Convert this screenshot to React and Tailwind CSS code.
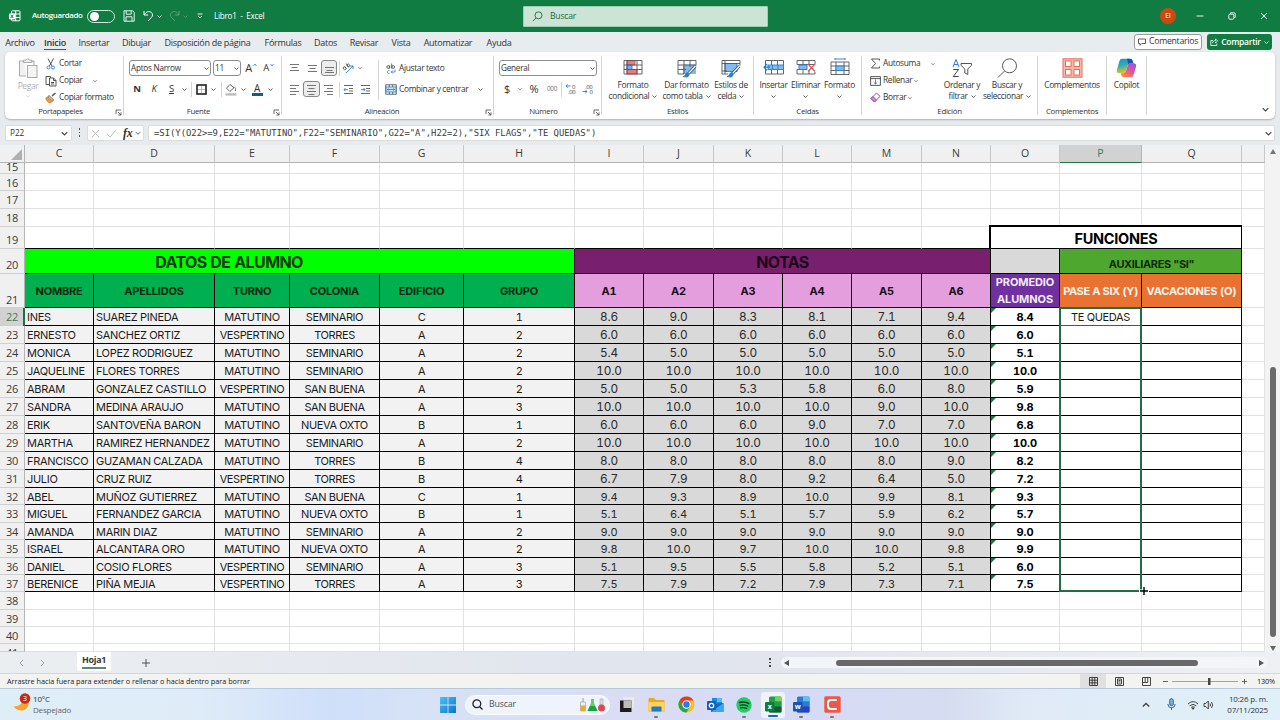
import React from "react";

const Chev = ({ c = "#444", w = 5, className = "" }) => (
  <svg width={w} height={w} viewBox="0 0 10 10" className={"shrink-0 " + className} fill="none" stroke={c} strokeWidth="1.7">
    <path d="M1 3l4 4 4-4" />
  </svg>
);

const Slot = ({ className = "", children }) => (
  <div className={"flex h-4 shrink-0 items-center justify-center " + className}>{children}</div>
);

const Sep = ({ className = "" }) => <div className={"w-px shrink-0 bg-[#d4d4d4] " + className} />;

const Launcher = () => (
  <svg width="7" height="7" viewBox="0 0 7 7" fill="none" stroke="#444" strokeWidth=".8">
    <path d="M1 5V1h5M3 3l3 3M6 3.4V6H3.4" />
  </svg>
);

const Group = ({ className, label, launch, pad = "", children }) => (
  <div className={"flex h-[66px] shrink-0 flex-col " + className}>
    <div className="flex min-h-0 flex-1">
      <div className="min-w-0 flex-1">{children}</div>
      <Sep className="mt-[4px]" />
    </div>
    <div className="flex h-[12px] shrink-0">
      <div className={"flex flex-1 items-center justify-center text-[7.8px] tracking-[-0.28px] text-[#333] " + pad}>{label}</div>
      {launch ? <div className="-ml-[9px] flex w-2 items-center"><Launcher /></div> : null}
      <Sep className="mb-[3px]" />
    </div>
  </div>
);

const Lines = ({ rows }) => (
  <svg width="11" height="11" viewBox="0 0 11 11" stroke="#666" strokeWidth=".9">
    {rows.map(([a, b, y]) => <path key={y} d={`M${a} ${y}H${b}`} />)}
  </svg>
);

const GridIcon = ({ children, w = 20 }) => (
  <svg width={w} height="20" viewBox="0 0 20 20" fill="none" stroke="#555" strokeWidth=".9">{children}</svg>
);

const Big = ({ className, icon, a, b, chev }) => (
  <div className={"flex shrink-0 flex-col items-center pt-[5px] " + className}>
    <div className="flex h-[22px] items-center">{icon}</div>
    <div className="mt-[1px] flex h-[11px] items-center whitespace-nowrap">{a}</div>
    <div className="flex h-[10px] items-center gap-[3px] whitespace-nowrap">{b}{chev ? <Chev w={5} /> : null}</div>
  </div>
);

const Tab = ({ className, children, on }) => (
  <div className={"flex h-[18px] shrink-0 items-center justify-center whitespace-nowrap " + className}>
    <span className={on ? "border-b border-[#107c41] pt-px font-semibold leading-[13px]" : "pt-px leading-[14px]"}>{children}</span>
  </div>
);

const Titlebar = () => (
  <div className="flex h-8 items-center bg-[#107c41] text-[8.4px] text-white">
    <svg width="12" height="12" viewBox="0 0 12 12" fill="none" stroke="white" strokeWidth="1" className="ml-[9px]">
      <rect x="2.5" y=".8" width="8.5" height="10" rx="1" />
      <path d="M6.7 1v10M3 4h8M6 7.5h5" />
      <rect x="0" y="3.4" width="6" height="6" rx=".8" fill="white" stroke="none" />
      <path d="M1.7 4.8l2.6 3.2M4.3 4.8L1.7 8" stroke="#107c41" />
    </svg>
    <div className="ml-[11px] w-[55px] text-[7.9px] font-semibold tracking-[-0.35px]">Autoguardado</div>
    <div className="flex h-[13px] w-[28px] items-center rounded-full border border-[#d5e8dc] pl-[2px]"><div className="size-[9px] rounded-full bg-white" /></div>
    <svg width="12" height="12" viewBox="0 0 12 12" fill="none" stroke="white" strokeWidth=".9" className="ml-[8px]">
      <path d="M1 .8h8.700l1.500 1.500v8.900H1zM3.200 1v3.200h5V1M3 11V6.800h6V11" />
    </svg>
    <svg width="11" height="12" viewBox="0 0 11 12" fill="none" stroke="white" strokeWidth="1" className="ml-[8px]">
      <path d="M1 1v4h4.200M1.200 4.800C3.300 1.600 6 .8 8 2.200c2 1.500 1.900 3.800.4 5.300L5 11" />
    </svg>
    <Chev c="white" w={5} className="ml-[3px]" />
    <svg width="11" height="12" viewBox="0 0 11 12" fill="none" stroke="#55a377" strokeWidth="1" className="ml-[7px]">
      <path d="M10 1v4H5.800M9.800 4.800C7.700 1.600 5 .8 3 2.200c-2 1.500-1.900 3.800-.4 5.300L6 11" />
    </svg>
    <Chev c="#55a377" w={5} className="ml-[3px]" />
    <svg width="6" height="6" viewBox="0 0 6 6" fill="none" stroke="white" strokeWidth=".9" className="ml-[9px]"><path d="M.5 1h5M1.200 3L3 4.800 4.800 3" /></svg>
    <div className="ml-[11px] w-[309px] whitespace-pre text-[8.100px] tracking-[-0.25px]">Libro1  -  Excel</div>
    <div className="flex h-[21px] w-[245px] items-center rounded-[1px] border border-[#9fcdb3] bg-[#cbe4d5] text-[8.600px] tracking-[-0.2px] text-[#1d6b41]">
      <svg width="11" height="11" viewBox="0 0 11 11" fill="none" stroke="#1d6b41" strokeWidth=".9" className="ml-[8px] mr-[7px]"><circle cx="6.500" cy="4.300" r="3.500" /><path d="M4 7L.8 10.200" /></svg>
      Buscar
    </div>
    <div className="ml-[392px] flex size-4 items-center justify-center rounded-full bg-[#ca4a14] text-[6.500px]">EI</div>
    <svg width="8" height="8" viewBox="0 0 8 8" stroke="white" strokeWidth=".9" className="ml-[20px]"><path d="M.5 4h7" /></svg>
    <svg width="8" height="8" viewBox="0 0 8 8" fill="none" stroke="white" strokeWidth=".9" className="ml-[24px]"><rect x=".8" y="2.200" width="5" height="5" rx="1" /><path d="M2.500 2V.8h3.700q1 0 1 1v3.700H6" /></svg>
    <svg width="8" height="8" viewBox="0 0 8 8" stroke="white" strokeWidth=".9" className="ml-[24px]"><path d="M1 1l6 6M7 1L1 7" /></svg>
  </div>
);

const Tabs = () => (
  <div className="flex h-5 items-center bg-[#e7ecef] text-[9px] tracking-[-0.27px] text-[#333]">
    <Tab className="w-[40px]">Archivo</Tab>
    <Tab className="w-[30px]" on>Inicio</Tab>
    <Tab className="w-[48px]">Insertar</Tab>
    <Tab className="w-[37px]">Dibujar</Tab>
    <Tab className="w-[105px]">Disposición de página</Tab>
    <Tab className="w-[46px]">Fórmulas</Tab>
    <Tab className="w-[39px]">Datos</Tab>
    <Tab className="w-[38px]">Revisar</Tab>
    <Tab className="w-[36px]">Vista</Tab>
    <Tab className="w-[58px]">Automatizar</Tab>
    <Tab className="w-[44px]">Ayuda</Tab>
    <div className="flex-1" />
    <div className="flex h-4 w-[68px] items-center justify-center gap-[3px] rounded-[3px] border border-[#9a9a9a] bg-white text-[8.700px]">
      <svg width="8" height="8" viewBox="0 0 8 8" fill="none" stroke="#333" strokeWidth=".8"><path d="M.5 1h7v4.500H3.800L2 7.300V5.500H.5z" /></svg>
      Comentarios
    </div>
    <div className="ml-[5px] mr-[8px] flex h-4 w-[65px] items-center justify-center gap-[3px] rounded-[3px] bg-[#107c41] text-[8.500px] font-semibold text-white">
      <svg width="8" height="8" viewBox="0 0 8 8" fill="none" stroke="white" strokeWidth=".8"><path d="M3 2.500H.8v5h6V5.500M2.500 5.200c.3-2 1.500-2.700 3-2.700V.8L7.700 3 5.500 5V3.700" /></svg>
      <span>Compartir</span><Chev c="white" w={5} />
    </div>
  </div>
);

const Combo = ({ className, children }) => (
  <div className={"flex h-4 shrink-0 items-center justify-between rounded-[3px] border border-[#8f8f8f] bg-white pl-[1px] pr-[1px] text-[8.200px] tracking-[-0.25px] " + className}>
    <span className="whitespace-nowrap">{children}</span><Chev w={5} />
  </div>
);

const Ribbon = () => (
  <div className="h-[73px] bg-[#e7ebed] px-[5px]">
    <div className="flex h-[67px] w-[1270px] rounded-[5px] bg-white text-[8.400px] tracking-[-0.34px] text-[#333] shadow-[0_1px_2px_rgba(0,0,0,0.25)]">
      <Group className="w-[119px]" label="Portapapeles" launch pad="pr-[8px]">
        <div className="flex">
          <div className="flex w-[40px] flex-col items-center pl-[6px] pt-[5px] text-[#b0b0b0]">
            <svg width="20" height="22" viewBox="0 0 20 22" fill="none" stroke="#aaa" strokeWidth="1">
              <path d="M8 19H1.500V4H6M13 4h3v4M5.500 5.500V3.200H8a1.800 1.800 0 013.500 0H14v2.300z" fill="#f1f1f1" />
              <rect x="9.500" y="8.500" width="9.500" height="12" fill="#f5f5f5" />
            </svg>
            <div className="mt-[1px] h-[11px] leading-[12px]">Pegar</div>
            <Chev c="#bbb" w={4} className="mt-[3px]" />
          </div>
          <div className="flex flex-col pt-[3px]">
            <div className="flex h-[17px] items-center">
              <svg width="12" height="12" viewBox="0 0 12 12" fill="none" strokeWidth=".9"><path d="M3 .5l4 7.500M8.500.5L4.500 8" stroke="#444" /><circle cx="3.500" cy="9.500" r="1.500" stroke="#2b7cd3" /><circle cx="8" cy="9.500" r="1.500" stroke="#2b7cd3" /></svg>
              <span className="ml-[2px]">Cortar</span>
            </div>
            <div className="flex h-[17px] items-center">
              <svg width="12" height="12" viewBox="0 0 12 12" fill="none" stroke="#444" strokeWidth=".9"><path d="M4.500 9.500H1v-8h4.500V3M4.500 3h4l2.500 2.500V11H4.500zM8.500 3v2.500H11M6 7.500h3M6 9h3" /></svg>
              <span className="ml-[2px] w-[34px]">Copiar</span><Chev w={4} />
            </div>
            <div className="flex h-[17px] items-center">
              <svg width="12" height="12" viewBox="0 0 12 12" fill="none" strokeWidth="1"><path d="M7 4l3.500-3" stroke="#555" strokeWidth="1.600" /><path d="M4 3.500L8.500 8l-1 1.200L3 4.800z" fill="#fff" stroke="#555" /><path d="M3 5L.8 6c.8 2.600 2 4.200 4 5l2.500-2z" fill="#f29a42" stroke="#e07b20" /></svg>
              <span className="ml-[2px]">Copiar formato</span>
            </div>
          </div>
        </div>
      </Group>

      <Group className="w-[158px]" label="Fuente" launch pad="pr-[9px]">
        <div className="flex pl-[5px] pt-[8px]">
          <Combo className="w-[82px]">Aptos Narrow</Combo>
          <Combo className="ml-[2px] w-[28px]">11</Combo>
          <Slot className="w-[19px] gap-px pl-px"><span className="text-[11px]">A</span><svg width="4" height="4" viewBox="0 0 4 4" fill="none" stroke="#2b7cd3" strokeWidth=".8" className="mb-[6px]"><path d="M.5 3L2 1l1.500 2" /></svg></Slot>
          <Slot className="w-[17px] gap-px"><span className="text-[9.500px]">A</span><svg width="4" height="4" viewBox="0 0 4 4" fill="none" stroke="#2b7cd3" strokeWidth=".8" className="mb-[6px]"><path d="M.5 1L2 3l1.500-2" /></svg></Slot>
        </div>
        <div className="flex pl-[5px] pt-[5px] text-[9.500px]">
          <Slot className="w-4"><b>N</b></Slot>
          <Slot className="w-[18px]"><i>K</i></Slot>
          <Slot className="w-[17px]"><u>S</u></Slot>
          <Slot className="w-[9px]"><Chev /></Slot>
          <Slot className="w-[5px]"><Sep className="h-[15px]" /></Slot>
          <Slot className="w-[14px]"><svg width="11" height="11" viewBox="0 0 11 11" fill="none" stroke="#111" strokeWidth="1.500"><rect x="1" y="1" width="9" height="9" /><path d="M5.500 2v7M2 5.500h7" stroke="#aaa" strokeWidth=".8" /></svg></Slot>
          <Slot className="w-[11px]"><Chev /></Slot>
          <Slot className="w-[4px]"><Sep className="h-[15px]" /></Slot>
          <Slot className="w-[15px]"><svg width="12" height="13" viewBox="0 0 12 13" fill="none" stroke="#555" strokeWidth=".9"><path d="M5 1.500L1.500 5.200l3.300 3.300L9 4.700z" /><path d="M9.500 4q1.800 1.500 1 4" stroke="#2b7cd3" /><rect x=".5" y="10.200" width="11" height="2.400" fill="#bdbdbd" stroke="none" /></svg></Slot>
          <Slot className="w-[10px]"><Chev /></Slot>
          <Slot className="w-[18px]"><div className="flex flex-col items-center"><span className="h-[10px] text-[10px] leading-[10px]">A</span><div className="h-[3px] w-[11px] bg-[#156082]" /></div></Slot>
          <Slot className="w-[9px]"><Chev /></Slot>
        </div>
      </Group>

      <Group className="w-[212px]" label="Alineación" launch pad="pr-[12px]">
        <div className="flex pt-[8px]">
          <div className="flex flex-col gap-[5px] pl-[4px]">
            <div className="flex">
              <Slot className="w-[17px]"><Lines rows={[[1, 10, 1.5], [2.5, 8.5, 4.5], [1, 10, 7.5]]} /></Slot>
              <Slot className="w-[18px]"><Lines rows={[[1, 10, 2.5], [2.5, 8.5, 5.5], [1, 10, 8.5]]} /></Slot>
              <Slot className="w-4 rounded-[3px] border border-[#888] bg-[#ececec]"><Lines rows={[[1, 10, 4.5], [2.5, 8.5, 7.5], [1, 10, 9.5]]} /></Slot>
              <Slot className="w-[5px]"><Sep className="h-[15px]" /></Slot>
              <Slot className="w-[12px]"><svg width="12" height="12" viewBox="0 0 12 12" fill="none" stroke="#444" strokeWidth=".8"><ellipse cx="2.600" cy="6.300" rx="1.300" ry="1.500" transform="rotate(-40 2.600 6.300)" /><path d="M2.600 4.400L4.600 6.900M4 1.500l3 3.800" /><ellipse cx="6.300" cy="3.400" rx="1.300" ry="1.500" transform="rotate(-40 6.300 3.400)" /><path d="M4 11l7-7M11 7V4H8" stroke="#2b7cd3" strokeWidth=".9" /></svg></Slot>
              <Slot className="w-[11px]"><Chev w={4} /></Slot>
            </div>
            <div className="flex">
              <Slot className="w-[17px]"><Lines rows={[[1, 10, 1.5], [1, 7, 4.5], [1, 10, 7.5], [1, 7, 10.5]]} /></Slot>
              <Slot className="w-[17px] rounded-[3px] border border-[#888] bg-[#ececec]"><Lines rows={[[1, 10, 1.5], [2.5, 8.5, 4.5], [1, 10, 7.5], [2.5, 8.5, 10.5]]} /></Slot>
              <Slot className="w-[17px]"><Lines rows={[[1, 10, 1.5], [4, 10, 4.5], [1, 10, 7.5], [4, 10, 10.5]]} /></Slot>
              <Slot className="w-[5px]"><Sep className="h-[15px]" /></Slot>
              <Slot className="w-[12px]"><svg width="11" height="11" viewBox="0 0 11 11" fill="none" stroke="#555" strokeWidth=".9"><path d="M1 1.500h9M6 4.500h4M6 7h4M1 9.500h9" /><path d="M5 5.700H1M2.500 4L1 5.700l1.500 1.600" stroke="#2b7cd3" /></svg></Slot>
              <Slot className="w-[23px]"><svg width="11" height="11" viewBox="0 0 11 11" fill="none" stroke="#555" strokeWidth=".9"><path d="M1 1.500h9M6 4.500h4M6 7h4M1 9.500h9" /><path d="M1 5.700h4M3.500 4L5 5.700 3.500 7.300" stroke="#2b7cd3" /></svg></Slot>
            </div>
          </div>
          <Sep className="ml-[1px] h-[40px]" />
          <div className="flex flex-col gap-[5px] pl-[6px]">
            <div className="flex h-4 items-center pt-px">
              <svg width="12" height="12" viewBox="0 0 12 12" fill="none" stroke="#444" strokeWidth=".8"><circle cx="3.200" cy="4" r="1.400" /><path d="M4.700 2.500v3M6.700.5v5" /><circle cx="8.200" cy="4" r="1.400" /><path d="M4.600 7.600a1.500 1.500 0 100 2.600" stroke="#2b7cd3" /><path d="M10 6.500V9H6.300M7.700 7.500L6.200 9l1.500 1.500" stroke="#2b7cd3" /></svg>
              <span className="ml-[2px]">Ajustar texto</span>
            </div>
            <div className="flex h-4 items-center">
              <svg width="12" height="11" viewBox="0 0 12 11" fill="none" stroke="#444" strokeWidth=".8"><rect x=".8" y=".8" width="10.400" height="9.400" /><path d="M4.300 1v2M7.700 1v2M4.300 8v2M7.700 8v2" /><rect x="1" y="3" width="10" height="5" fill="#cfe6fa" stroke="#2b7cd3" /><path d="M2 5.500h8M3.500 4.500l-1.200 1 1.200 1M8.500 4.500l1.200 1-1.200 1" stroke="#2b7cd3" /></svg>
              <span className="ml-[2px] w-[79px]">Combinar y centrar</span><Chev />
            </div>
          </div>
        </div>
      </Group>

      <Group className="w-[108px]" label="Número" launch pad="pr-[9px]">
        <div className="flex pl-[5px] pt-[8px]"><Combo className="w-[98px]">General</Combo></div>
        <div className="flex pl-[4px] pt-[5px]">
          <Slot className="w-[18px] text-[11px]">$</Slot>
          <Slot className="w-[7px]"><Chev w={4} /></Slot>
          <Slot className="w-[22px] text-[11px]">%</Slot>
          <Slot className="w-[14px] text-[6.500px] text-[#777]">000</Slot>
          <Slot className="w-[5px]"><Sep className="h-[15px]" /></Slot>
          <Slot className="w-[14px]"><svg width="12" height="12" viewBox="0 0 12 12" fontSize="6" fill="#444"><text x="7" y="5.500">0</text><text x="3" y="11">.00</text><path d="M5.500 3H1M2.700 1.300L1 3l1.700 1.700" fill="none" stroke="#2b7cd3" strokeWidth=".9" /></svg></Slot>
          <Slot className="w-[20px]"><svg width="12" height="12" viewBox="0 0 12 12" fontSize="6" fill="#444"><text x="3" y="5.500">.00</text><text x="7.500" y="11">0</text><path d="M.5 8.500H5M3.300 6.800L5 8.500l-1.700 1.700" fill="none" stroke="#2b7cd3" strokeWidth=".9" /></svg></Slot>
        </div>
      </Group>

      <Group className="w-[152px]" label="Estilos">
        <div className="flex pl-[4px]">
          <Big className="w-[54px]" a="Formato" b="condicional" chev icon={<GridIcon><rect x="4" y="2.500" width="8" height="4.500" fill="#f4777f" stroke="#e2505a" /><rect x="4" y="7" width="5" height="4.500" fill="#6cb1ee" stroke="#2b7cd3" /><rect x="4" y="11.500" width="10" height="4.500" fill="#f4777f" stroke="#e2505a" /><path d="M1 2.500h18v13.500H1zM1 7h18M1 11.500h18M4 2.500V16M14 2.500V16" /></GridIcon>} />
          <Big className="w-[53px]" a="Dar formato" b="como tabla" chev icon={<GridIcon><rect x="6" y="6.500" width="13" height="9.500" fill="#7fbcf2" stroke="none" /><path d="M1 2.500h18v5M1 2.500v13.500h6M1 7h18M1 11.500h8M7 2.500V16M13 2.500V9" /><path d="M18.500 8l-7 7.500" stroke="#444" strokeWidth="2.800" /><path d="M18.500 8l-7 7.500" stroke="#fff" strokeWidth="1.200" /><path d="M6 18.500q2 0 2.500-2t2-1.800 1.500 2-2 2.300z" fill="#2b7cd3" stroke="#2b7cd3" /></GridIcon>} />
          <Big className="w-[36px]" a="Estilos de" b="celda" chev icon={<GridIcon><rect x="4" y="5.500" width="12" height="8" fill="#7fbcf2" stroke="#2b7cd3" /><path d="M1 2.500h18v5M1 2.500v13.500h6M1 5.500h18M4 2.500V16M1 13h5" /><path d="M18.500 8l-7 7.500" stroke="#444" strokeWidth="2.800" /><path d="M18.500 8l-7 7.500" stroke="#fff" strokeWidth="1.200" /><path d="M6 18.500q2 0 2.500-2t2-1.800 1.500 2-2 2.300z" fill="#2b7cd3" stroke="#2b7cd3" /></GridIcon>} />
        </div>
      </Group>

      <Group className="w-[108px]" label="Celdas">
        <div className="flex pl-[3px]">
          <Big className="w-[33px]" a="Insertar" b="" chev icon={<GridIcon w={22}><path d="M1.500 2.500h18v13.500h-18zM7.500 2.500V16M13.500 2.500V16" /><rect x="4" y="7" width="15.500" height="4.500" fill="#7fbcf2" stroke="#2b7cd3" /><path d="M8.500 7v4.500M14 7v4.500" stroke="#2b7cd3" /><path d="M6 9.200H0M3 6L0 9.200l3 3.300" stroke="#2b7cd3" strokeWidth="1.200" /></GridIcon>} />
          <Big className="w-[31px]" a="Eliminar" b="" chev icon={<GridIcon><path d="M1 2.500h18v4M1 2.500v4h18M1 11.500V16h18v-2M1 11.500h10M7 2.500v4M13 2.500v4M7 12v4M13 12v4" /><rect x="3" y="7" width="8" height="4.500" fill="#7fbcf2" stroke="#2b7cd3" /><path d="M12 6l7 7.500M19 6l-7 7.500" stroke="#e2505a" strokeWidth="1.200" /></GridIcon>} />
          <Big className="w-[37px]" a="Formato" b="" chev icon={<GridIcon><path d="M1 4h18v12.500H1zM1 8h18M1 12.500h18M6 4v12.500M14 4v12.500" /><rect x="6" y="8" width="8" height="4.500" fill="#7fbcf2" stroke="#2b7cd3" /><path d="M5 1h10M5 0v2M15 0v2" stroke="#2b7cd3" /></GridIcon>} />
        </div>
      </Group>

      <Group className="w-[176px]" label="Edición">
        <div className="flex pl-[8px]">
          <div className="flex w-[66px] flex-col pt-[3px]">
            <div className="flex h-[17px] items-center">
              <svg width="11" height="11" viewBox="0 0 11 11" fill="none" stroke="#444" strokeWidth=".9"><path d="M9.500 2.500V1H1.500l4 4.500-4 4.500h8V8.500" /></svg>
              <span className="ml-[2px] w-[48px]">Autosuma</span><Chev w={4} />
            </div>
            <div className="flex h-[17px] items-center">
              <svg width="11" height="10" viewBox="0 0 11 10" fill="none" stroke="#444" strokeWidth=".9"><path d="M.6.600h9.800v8.800H.6zM.6 2.600h9.800" /><path d="M5.500 3.500v4.500M3.700 6.300L5.500 8l1.800-1.700" stroke="#2b7cd3" /></svg>
              <span className="ml-[2px] mr-[2px]">Rellenar</span><Chev w={4} />
            </div>
            <div className="flex h-[17px] items-center">
              <svg width="11" height="11" viewBox="0 0 11 11" fill="none" stroke="#8f3fa8" strokeWidth=".9"><path d="M1 6.500L6.500 1 10 4.300 4.500 10z" /><path d="M1 6.500L3 4.500l3.500 3.500-2 2z" fill="#c98fdb" /></svg>
              <span className="ml-[2px] mr-[2px]">Borrar</span><Chev w={4} />
            </div>
          </div>
          <Big className="w-[52px]" a="Ordenar y" b="filtrar" chev icon={<svg width="20" height="20" viewBox="0 0 20 20" fill="none" strokeWidth="1"><path d="M1 9L4 1.500 7 9M2 6.500h4" stroke="#2b7cd3" /><path d="M1.300 11.500H6.500L1.300 18.500h5.400" stroke="#444" /><path d="M9 5.500h10.500v1.800L15.800 11v5.500l-3 -1.500v-4L9 7.300z" stroke="#555" /></svg>} />
          <Big className="w-[38px]" a="Buscar y" b="seleccionar" chev icon={<svg width="21" height="21" viewBox="0 0 21 21" fill="none" stroke="#444" strokeWidth=".9"><circle cx="12.500" cy="7.800" r="7" /><path d="M7.500 13L1 19.500" /></svg>} />
        </div>
      </Group>

      <Group className="w-[69px]" label="Complementos">
        <Big className="w-full" a="Complementos" b="" icon={<svg width="21" height="20" viewBox="0 0 21 20" stroke="#e0705c" strokeWidth="1"><rect x="1" y=".8" width="19" height="18.400" fill="#f9b8aa" /><rect x="3.500" y="3" width="5.500" height="5.500" fill="#fff" /><rect x="12" y="3" width="5.500" height="5.500" fill="#fff" /><rect x="3.500" y="11.500" width="5.500" height="5.500" fill="#fff" /><rect x="12" y="11.500" width="5.500" height="5.500" fill="#fff" /></svg>} />
      </Group>

      <Group className="w-[40px]" label="">
        <Big className="w-full" a="Copilot" b="" icon={<svg width="21" height="20" viewBox="0 0 21 20">
          <defs>
            <linearGradient id="cpa" x1="0" y1="0" x2=".3" y2="1"><stop offset="0" stopColor="#1b8fe0" /><stop offset=".5" stopColor="#2bb0a8" /><stop offset="1" stopColor="#f3c21c" /></linearGradient>
            <linearGradient id="cpb" x1=".8" y1="0" x2=".2" y2="1"><stop offset="0" stopColor="#a14fe0" /><stop offset=".5" stopColor="#e2559a" /><stop offset="1" stopColor="#f79138" /></linearGradient>
          </defs>
          <path d="M6 .8h8q2 0 2.600 2l.8 2.500h-3q-2 0-2.600 2l-2 6q-.6 2-2.600 2H3.500Q0 15.300 1 11.800L3.400 3Q4 .8 6 .8z" fill="url(#cpa)" />
          <path d="M15 19.200H8q-2 0-2.600-2l-.6-2h2.400q2 0 2.600-2l2-6q.6-2 2.600-2h3.100q3.500 0 2.500 3.500L17.600 17q-.6 2.200-2.600 2.200z" fill="url(#cpb)" />
          <path d="M11 .8h3q2 0 2.600 2l.8 2.500h-3q-1.500 0-2.200 1.200z" fill="#1c4fb8" />
        </svg>} />
      </Group>
      <div className="flex flex-1 items-end justify-end pb-[6px] pr-[6px]"><Chev w={7} /></div>
    </div>
  </div>
);

const FormulaBar = () => (
  <div className="flex h-5 items-start bg-[#e8ebed] pl-[5px] text-[#333]">
    <div className="flex h-[16px] w-[67px] items-center justify-between rounded-[2px] border border-[#dcdcdc] bg-white pl-[4px] pr-[3px] text-[8.300px] tracking-[-0.1px]">P22<Chev w={7} /></div>
    <div className="flex h-[15px] w-[15px] flex-col items-center justify-center gap-[2px]"><i className="size-[1.500px] bg-[#555]" /><i className="size-[1.500px] bg-[#555]" /><i className="size-[1.500px] bg-[#555]" /></div>
    <div className="flex h-[16px] w-[57px] items-center rounded-[2px] border border-[#dcdcdc] bg-white pl-[3px]">
      <svg width="9" height="9" viewBox="0 0 9 9" stroke="#b5b5b5" strokeWidth=".9"><path d="M1 1l7 7M8 1L1 8" /></svg>
      <svg width="11" height="9" viewBox="0 0 11 9" fill="none" stroke="#b5b5b5" strokeWidth=".9" className="ml-[6px]"><path d="M1 5l3 3 6-7" /></svg>
      <i className="ml-[6px] font-['Liberation_Serif',serif] text-[12px] font-bold leading-none tracking-[-0.3px]">fx</i>
      <Chev w={6} c="#999" className="ml-[3px]" />
    </div>
    <div className="ml-[4px] flex h-[16px] w-[1127px] items-center justify-between rounded-[2px] border border-[#dcdcdc] bg-white pl-[5px] pr-[2px]">
      <span className="whitespace-pre pt-px font-['DejaVu_Sans_Mono',monospace] text-[8.900px] tracking-[-0.015px] text-[#3a3a3a]">{'=SI(Y(O22>=9,E22="MATUTINO",F22="SEMINARIO",G22="A",H22=2),"SIX FLAGS","TE QUEDAS")'}</span>
      <Chev w={7} />
    </div>
  </div>
);

const cols = ["C", "D", "E", "F", "G", "H", "I", "J", "K", "L", "M", "N", "O", "P", "Q", ""];
const data = [
  ["INES", "SUAREZ PINEDA", "MATUTINO", "SEMINARIO", "C", "1", "8.6", "9.0", "8.3", "8.1", "7.1", "9.4", "8.4"],
  ["ERNESTO", "SANCHEZ ORTIZ", "VESPERTINO", "TORRES", "A", "2", "6.0", "6.0", "6.0", "6.0", "6.0", "6.0", "6.0"],
  ["MONICA", "LOPEZ RODRIGUEZ", "MATUTINO", "SEMINARIO", "A", "2", "5.4", "5.0", "5.0", "5.0", "5.0", "5.0", "5.1"],
  ["JAQUELINE", "FLORES TORRES", "MATUTINO", "SEMINARIO", "A", "2", "10.0", "10.0", "10.0", "10.0", "10.0", "10.0", "10.0"],
  ["ABRAM", "GONZALEZ CASTILLO", "VESPERTINO", "SAN BUENA", "A", "2", "5.0", "5.0", "5.3", "5.8", "6.0", "8.0", "5.9"],
  ["SANDRA", "MEDINA ARAUJO", "MATUTINO", "SAN BUENA", "A", "3", "10.0", "10.0", "10.0", "10.0", "9.0", "10.0", "9.8"],
  ["ERIK", "SANTOVEÑA BARON", "MATUTINO", "NUEVA OXTO", "B", "1", "6.0", "6.0", "6.0", "9.0", "7.0", "7.0", "6.8"],
  ["MARTHA", "RAMIREZ HERNANDEZ", "MATUTINO", "SEMINARIO", "A", "2", "10.0", "10.0", "10.0", "10.0", "10.0", "10.0", "10.0"],
  ["FRANCISCO", "GUZAMAN CALZADA", "MATUTINO", "TORRES", "B", "4", "8.0", "8.0", "8.0", "8.0", "8.0", "9.0", "8.2"],
  ["JULIO", "CRUZ RUIZ", "VESPERTINO", "TORRES", "B", "4", "6.7", "7.9", "8.0", "9.2", "6.4", "5.0", "7.2"],
  ["ABEL", "MUÑOZ GUTIERREZ", "MATUTINO", "SAN BUENA", "C", "1", "9.4", "9.3", "8.9", "10.0", "9.9", "8.1", "9.3"],
  ["MIGUEL", "FERNANDEZ GARCIA", "MATUTINO", "NUEVA OXTO", "B", "1", "5.1", "6.4", "5.1", "5.7", "5.9", "6.2", "5.7"],
  ["AMANDA", "MARIN DIAZ", "MATUTINO", "SEMINARIO", "A", "2", "9.0", "9.0", "9.0", "9.0", "9.0", "9.0", "9.0"],
  ["ISRAEL", "ALCANTARA ORO", "MATUTINO", "NUEVA OXTO", "A", "2", "9.8", "10.0", "9.7", "10.0", "10.0", "9.8", "9.9"],
  ["DANIEL", "COSIO FLORES", "VESPERTINO", "SEMINARIO", "A", "3", "5.1", "9.5", "5.5", "5.8", "5.2", "5.1", "6.0"],
  ["BERENICE", "PIÑA MEJIA", "VESPERTINO", "TORRES", "A", "3", "7.5", "7.9", "7.2", "7.9", "7.3", "7.1", "7.5"],
];

const Cell = ({ className = "", children }) => (
  <div className={"flex min-w-0 items-center justify-center overflow-hidden whitespace-nowrap border-b border-r " + className}>{children}</div>
);
const RowHead = ({ n, className = "items-center" }) => (
  <div className={"flex justify-center overflow-hidden border-b border-r border-b-[#d0d0d0] border-r-[#b5b5b5] font-['Open_Sans',sans-serif] text-[11px] leading-none tracking-[-0.2px] " + className + (n === 22 ? " bg-[#d2d2d2] text-[#3f7a5e]" : " bg-[#f0f0f0] text-[#3a3a3a]")}>{n}</div>
);
const blank = (n, count = 16) => Array.from({ length: count }, (_, i) => <Cell key={n + "-" + i} className="border-[#e1e1e1] bg-white" />);
const headRule = (n, count) => Array.from({ length: count }, (_, i) => <Cell key={n + "-" + i} className="border-b-black border-r-[#e1e1e1] bg-white" />);
const heads = ["NOMBRE", "APELLIDOS", "TURNO", "COLONIA", "EDIFICIO", "GRUPO", "A1", "A2", "A3", "A4", "A5", "A6"];

const Sheet = () => (
  <div className="flex h-[507px] bg-[#f0f0f0]">
    <div className="relative grid w-[1265px] grid-cols-[25px_69px_121px_75px_90px_84px_111px_69px_70px_69px_69px_70px_69px_69px_82px_100px_23px] grid-rows-[18px_11px_17px_18px_18px_22px_25px_34px_repeat(10,18px)_17px_18px_17px_18px_17px_17px_18px_17px_17px_8px] overflow-hidden font-['Inter',sans-serif] text-[11px] tabular-nums text-[#1c1c1c]">
      <div className="flex items-end justify-end border-b border-r border-[#b5b5b5] bg-[#f0f0f0] p-[2px]">
        <svg width="11" height="11" viewBox="0 0 11 11"><path d="M11 0v11H0z" fill="#b0b0b0" /></svg>
      </div>
      {cols.map((c) => (
        <Cell key={"h" + c} className={"pt-px font-['Open_Sans',sans-serif] text-[10.500px] " + (c === "P" ? "border-b-[#217346] border-r-[#b5b5b5] bg-[#d2d2d2] text-[#3f7a5e]" : "border-b-[#b5b5b5] border-r-[#c8c8c8] bg-[#f0f0f0] text-[#3a3a3a]")}>{c}</Cell>
      ))}
      <RowHead n={15} className="items-end pb-[1px]" />{blank(15)}
      <RowHead n={16} />{blank(16)}
      <RowHead n={17} />{blank(17)}
      <RowHead n={18} />{blank(18)}
      <RowHead n={19} className="items-end pb-[3px]" />
      {headRule("a", 12)}
      <Cell className="col-span-3 border-black bg-white pt-[3px] text-[14.500px] font-bold tracking-[-0.3px] text-black">FUNCIONES</Cell>
      <Cell className="border-[#e1e1e1] bg-white" />

      <RowHead n={20} className="items-end pb-[3px]" />
      <Cell className="col-span-6 border-black bg-[#00ff00] pr-[141px] pt-px text-[16px] font-bold tracking-[-0.58px] text-[#0c3a0c]">DATOS DE ALUMNO</Cell>
      <Cell className="col-span-6 border-black bg-[#78206e] pt-px text-[16px] font-bold tracking-[-0.6px] text-[#1d0519]">NOTAS</Cell>
      <Cell className="border-black bg-[#d9d9d9]" />
      <Cell className="col-span-2 border-black bg-[#4ea72e] pt-[6px] pl-[2px] font-bold tracking-[-0.4px] text-[#0f2908]">AUXILIARES "SI"</Cell>
      <Cell className="border-[#e1e1e1] bg-white" />

      <RowHead n={21} className="items-end pb-[2px]" />
      {heads.map((h, i) => (
        <Cell key={h} className={"border-black pt-[2px] font-bold tracking-[-0.2px] " + (i < 6 ? "bg-[#00b050] text-[#06290f]" : "bg-[#e59edd] text-[#1a0d18]")}>{h}</Cell>
      ))}
      <Cell className="border-black bg-[#7030a0] text-center text-[11px] font-bold leading-[17px] tracking-[-0.1px] text-[#f3ecf8]"><div>PROMEDIO<br />ALUMNOS</div></Cell>
      <Cell className="border-black bg-[#e97132] pt-[2px] font-bold tracking-[-0.4px] text-[#fff3ea]">PASE A SIX (Y)</Cell>
      <Cell className="border-black bg-[#e97132] pt-[2px] font-bold tracking-[-0.2px] text-[#fff3ea]">VACACIONES (O)</Cell>
      <Cell className="border-[#e1e1e1] bg-white" />

      {data.map((r, i) => (
        <React.Fragment key={r[1]}>
          <RowHead n={22 + i} />
          {r.map((v, j) => {
            if (j < 2) return <Cell key={j} className="border-black bg-[#f2f2f2] pl-[2px] pt-[2px]"><span className="w-full tracking-[-0.3px]">{v}</span></Cell>;
            if (j < 6) return <Cell key={j} className="border-black bg-[#f2f2f2] pt-[2px] tracking-[-0.4px]">{v}</Cell>;
            if (j < 12) return <Cell key={j} className={"border-black bg-[#d9d9d9] pt-[2px] text-[#2a2a2a] " + (i < 10 ? "text-[11.800px] tracking-[-0.2px]" : "text-[11px] tracking-[-0.1px]")}>{v}</Cell>;
            return (
              <Cell key={j} className="relative border-black bg-white pt-[2px] font-bold tracking-[-0.1px] text-black">
                {v}
                <svg width="5" height="5" viewBox="0 0 5 5" className="absolute left-0 top-0"><path d="M0 0h5L0 5z" fill="#1a7a3a" /></svg>
              </Cell>
            );
          })}
          <Cell className="border-black bg-white pt-[2px] tracking-[-0.35px]">{i === 0 ? "TE QUEDAS" : ""}</Cell>
          <Cell className="border-black bg-white" />
          <Cell className="border-[#e1e1e1] bg-white" />
        </React.Fragment>
      ))}
      <RowHead n={38} />{blank(38)}
      <RowHead n={39} />{blank(39)}
      <RowHead n={40} />{blank(40)}
      <RowHead n={41} className="items-start pt-[3px]" />{blank(41)}

      <div className="absolute left-[989px] top-[80px] h-[24px] w-[253px] border-2 border-b-0 border-r border-black" />
      <div className="absolute left-[1059px] top-[162px] h-[285px] w-[83px] border-2 border-[#1d6f46]" />
      <div className="absolute left-[1060px] top-[180px] h-px w-[81px] bg-[#1d6f46]" />
      <div className="absolute left-[23px] top-[163px] h-[18px] w-[2px] bg-[#1d6f46]" />
      <svg width="10" height="10" viewBox="0 0 10 10" className="absolute left-[1139px] top-[441px]"><path d="M5 0v10M0 5h10" stroke="white" strokeWidth="3" /><path d="M5 1v8M1 5h8" stroke="black" strokeWidth="1.400" /></svg>
    </div>
    <div className="flex w-[15px] flex-col items-center bg-[#f3f3f3]">
      <svg width="6" height="5" viewBox="0 0 6 5" className="mt-[4px]"><path d="M3 0l3 5H0z" fill="#777" /></svg>
      <div className="mt-[213px] h-[270px] w-[6px] rounded-full bg-[#6b6b6b]" />
      <svg width="6" height="5" viewBox="0 0 6 5" className="mt-[9px]"><path d="M3 5l3-5H0z" fill="#666" /></svg>
    </div>
  </div>
);

const SheetBar = () => (
  <div className="flex h-[21px] items-center bg-[linear-gradient(90deg,#ebeef1,#e1e5ed_45%,#e2e5ee_60%,#eef0f3)]">
    <svg width="5" height="8" viewBox="0 0 5 8" fill="none" stroke="#999" strokeWidth=".9" className="ml-[19px]"><path d="M4 1L1 4l3 3" /></svg>
    <svg width="5" height="8" viewBox="0 0 5 8" fill="none" stroke="#999" strokeWidth=".9" className="ml-[16px]"><path d="M1 1l3 3-3 3" /></svg>
    <div className="ml-[32px] flex h-[19px] w-[34px] items-start justify-center self-start rounded-b-[3px] bg-white text-[8.900px] font-bold tracking-[-0.25px] text-[#2f3a35]"><span className="mt-[1px] border-b-2 border-[#5b8a76] leading-[14px]">Hoja1</span></div>
    <svg width="8" height="8" viewBox="0 0 8 8" stroke="#444" strokeWidth=".9" className="ml-[31px]"><path d="M4 0v8M0 4h8" /></svg>
    <div className="ml-[618px] flex w-[4px] flex-col items-center gap-[2px]"><i className="size-[1.500px] bg-[#444]" /><i className="size-[1.500px] bg-[#444]" /><i className="size-[1.500px] bg-[#444]" /></div>
    <div className="ml-[9px] flex h-[11px] w-[487px] items-center rounded-full bg-[#f3f5f8]">
      <svg width="5" height="6" viewBox="0 0 5 6" className="ml-[3px]"><path d="M0 3l5-3v6z" fill="#555" /></svg>
      <div className="ml-[47px] h-[6px] w-[362px] rounded-full bg-[#686868]" />
      <svg width="5" height="6" viewBox="0 0 5 6" className="ml-[61px]"><path d="M5 3L0 0v6z" fill="#555" /></svg>
    </div>
  </div>
);

const Status = () => (
  <div className="flex h-[15px] items-center border-t border-[#d6d6d6] bg-[#f3f3f2] text-[7.300px] text-[#222]">
    <div className="w-[1080px] pl-[7px] pt-px tracking-[-0.02px]">Arrastre hacia fuera para extender o rellenar o hacia dentro para borrar</div>
    <div className="flex h-full w-[26px] items-center justify-center bg-[#e0e0e0]"><svg width="9" height="9" viewBox="0 0 9 9" fill="none" stroke="#333" strokeWidth=".9"><path d="M.5.5h8v8h-8zM3.200.5v8M5.800.5v8M.5 3.200h8M.5 5.800h8" /></svg></div>
    <div className="flex w-[27px] items-center justify-center"><svg width="9" height="9" viewBox="0 0 9 9" fill="none" stroke="#333" strokeWidth=".9"><path d="M.5.5h8v8h-8zM2.500 2h4v5h-4zM3.500 3.500h2M3.500 5h2" /></svg></div>
    <div className="flex w-[27px] items-center justify-center"><svg width="9" height="9" viewBox="0 0 9 9" fill="none" stroke="#333" strokeWidth=".9"><path d="M.5.5h8v8h-8zM3.200.5v5H.5M5.800.5v5H3.200" /></svg></div>
    <svg width="84" height="9" viewBox="0 0 84 9" stroke="#555" strokeWidth=".9" className="ml-[3px]"><path d="M0 4.500h5M79 4.500h5M81.500 2v5" /><path d="M9 4.500h66" stroke="#999" /><rect x="45" y="1" width="2.500" height="7" fill="#444" stroke="none" /></svg>
    <div className="ml-[10px] tracking-[-0.2px]">130%</div>
  </div>
);

const Task = ({ className, dot, children }) => (
  <div className={"flex h-8 shrink-0 flex-col items-center pt-[7px] " + className}>
    <div className="flex h-[18px] items-center">{children}</div>
    {dot ? <div className={"mt-[2px] h-[2px] rounded-full " + dot} /> : null}
  </div>
);

const Office = ({ l, a, b, c, d }) => (
  <svg width="17" height="17" viewBox="0 0 17 17">
    <rect x="4" y=".5" width="12.500" height="16" rx="1.500" fill={a} />
    <rect x="10" y=".5" width="6.500" height="5" fill={b} /><rect x="10" y="5.500" width="6.500" height="5" fill={a} /><rect x="4" y="10.500" width="12.500" height="6" rx="1" fill={c} />
    <rect x="0" y="6" width="9.500" height="9.500" rx="1.200" fill={d} />
    <text x="4.750" y="13.200" fontSize="7" fontWeight="700" fill="#fff" textAnchor="middle">{l}</text>
  </svg>
);

const Taskbar = () => (
  <div className="flex h-8 items-center border-t border-[#b8c8dc] bg-[linear-gradient(90deg,#deeef6_0%,#dfecf8_15%,#cfdffa_26%,#d6e2f6_33%,#dadcf2_50%,#d5dbf5_62%,#d6dcf0_74%,#dfeaf6_80%,#e0f0f8_100%)] text-[8px] tracking-[-0.18px] text-[#333]">
    <div className="flex w-[439px] items-center">
      <svg width="18" height="20" viewBox="0 0 18 20" className="ml-[13px] mb-[6px]">
        <path d="M12 6c5 2 4.500 8 1 11-3.500 2.500-9 2-12.500-2.500C6 14.500 10 11 12 6z" fill="#f5a52a" />
        <circle cx="12" cy="6.500" r="5.300" fill="#c42b1c" /><text x="12" y="9" fontSize="7" fill="#fff" textAnchor="middle">3</text>
      </svg>
      <div className="ml-[2px] leading-[10.500px]">10°C<br /><span className="text-[#666]">Despejado</span></div>
    </div>
    <Task className="w-[17px]"><svg width="16" height="16" viewBox="0 0 16 16"><defs><linearGradient id="win" x1="0" y1="0" x2="1" y2="1"><stop offset="0" stopColor="#4cc2f1" /><stop offset="1" stopColor="#0a74cf" /></linearGradient></defs><path d="M0 0h7.600v7.600H0zM8.400 0H16v7.600H8.400zM0 8.400h7.600V16H0zM8.400 8.400H16V16H8.400z" fill="url(#win)" /></svg></Task>
    <div className="ml-[9px] flex h-[20px] w-[145px] items-center rounded-full border border-white/70 bg-[#eef3fc]">
      <svg width="11" height="11" viewBox="0 0 11 11" fill="none" stroke="#222" strokeWidth="1.300" className="ml-[6px]"><circle cx="4.800" cy="4.800" r="3.900" /><path d="M7.700 7.700L10.500 10.500" /></svg>
      <span className="ml-[6px] w-[90px] text-[8.800px] text-[#555]">Buscar</span>
      <svg width="26" height="14" viewBox="0 0 26 14"><path d="M1.500 4h5v9h-5z" fill="#eee" stroke="#999" strokeWidth=".6" /><path d="M1.500 7.500h5V13h-5z" fill="#e3ac2e" /><path d="M4 0v4" stroke="#888" strokeWidth=".8" /><path d="M12 1h3v4l3.500 8h-10L12 5z" fill="#62cf6e" /><path d="M11 8h5l2.500 5h-10z" fill="#17a43b" /><path d="M21 1h3v6h-3z" fill="#ddd" stroke="#999" strokeWidth=".5" /><circle cx="22.500" cy="10" r="3.500" fill="#e0455c" /></svg>
    </div>
    <Task className="ml-[7px] w-[18px]"><svg width="15" height="15" viewBox="0 0 15 15"><rect x="4" y="0" width="11" height="11" fill="#e9e9e9" /><path d="M1 3.500h11.500V15H1z" fill="#1c1c1c" /><path d="M4.500 3.500h8V11h-8z" fill="#bdbdbd" /></svg></Task>
    <Task className="ml-[12px] w-[18px]" dot="w-[4px] bg-[#777]"><svg width="17" height="16" viewBox="0 0 17 16"><path d="M.5 2q0-1 1-1H6l2 2h7.500q1 0 1 1v10.500H.5z" fill="#e9a820" /><path d="M.5 5h16v9.500H.5z" fill="#ffd35c" /><path d="M3.500 14.500v-4q0-1 1-1h8q1 0 1 1v4z" fill="#1f78c8" /></svg></Task>
    <Task className="ml-[12px] w-[18px]"><svg width="17" height="17" viewBox="0 0 17 17"><circle cx="8.500" cy="8.500" r="8" fill="#fbc116" /><path d="M1.570 4.500A8 8 0 0115.430 4.500H8.500L5 10.500z" fill="#e33b2e" /><path d="M1.570 4.500A8 8 0 008.500 16.500L12 10.500H5z" fill="#2ba24c" /><circle cx="8.500" cy="8.500" r="4.200" fill="#fff" /><circle cx="8.500" cy="8.500" r="3.200" fill="#2f77e8" /></svg></Task>
    <Task className="ml-[11px] w-[18px]"><svg width="17" height="16" viewBox="0 0 17 16"><path d="M5 1h10v7H5z" fill="#1a8ee0" /><path d="M10 1h5v4h-5z" fill="#4cc0f5" /><path d="M4 7l12.500-1v9H4z" fill="#1568c0" /><path d="M4 15l12.500-9v9z" fill="#35a9ee" /><rect x="0" y="4" width="9" height="9" rx="1" fill="#0f5fb4" /><circle cx="4.500" cy="8.500" r="2.200" fill="none" stroke="#fff" strokeWidth="1.300" /></svg></Task>
    <Task className="ml-[11px] w-[18px]" dot="w-[4px] bg-[#777]"><svg width="16" height="16" viewBox="0 0 16 16" fill="none" stroke="#14301c" strokeLinecap="round"><circle cx="8" cy="8" r="7.700" fill="#1fce62" stroke="none" /><path d="M3.500 5.500q5-1.500 9.300 1" strokeWidth="1.500" /><path d="M4 8.300q4.200-1.200 7.800.8" strokeWidth="1.300" /><path d="M4.500 10.900q3.400-.9 6.300.7" strokeWidth="1.100" /></svg></Task>
    <div className="ml-[8px] flex h-[26px] w-[24px] flex-col items-center rounded-[3px] bg-[#eff3fb] pt-[4px]"><Office l="x" a="#21a04a" b="#7ad05a" c="#145a32" d="#107c41" /><div className="mt-[2px] h-[2px] w-[10px] rounded-full bg-[#1667b7]" /></div>
    <Task className="ml-[7px] w-[18px]" dot="w-[4px] bg-[#777]"><Office l="w" a="#2b7cd3" b="#5cc0f5" c="#2a3fc4" d="#1b54b0" /></Task>
    <Task className="ml-[13px] w-[18px]" dot="w-[4px] bg-[#777]"><svg width="17" height="17" viewBox="0 0 17 17"><rect x=".3" y=".3" width="16.400" height="16.400" rx="1.500" fill="#ee5747" /><path d="M12.800 4H7Q4 4 4 7v3q0 3 3 3h5.800" fill="none" stroke="#fff" strokeWidth="2" /></svg></Task>
    <div className="flex-1" />
    <Chev w={8} className="rotate-180" />
    <svg width="9" height="13" viewBox="0 0 9 13" fill="none" stroke="#2f5f9f" strokeWidth="1" className="ml-[17px]"><rect x="2.700" y=".7" width="3.600" height="7" rx="1.800" fill="#7fb0e6" /><path d="M.8 6q.3 3.800 3.700 3.800T8.200 6M4.500 9.800V12" /></svg>
    <svg width="12" height="10" viewBox="0 0 12 10" fill="none" stroke="#333" strokeWidth=".9" className="ml-[11px]"><path d="M1 4Q6-.8 11 4M2.600 5.800q3.400-3 6.800 0M4.200 7.400q1.800-1.500 3.600 0" /><circle cx="6" cy="8.500" r=".7" fill="#333" /></svg>
    <svg width="11" height="10" viewBox="0 0 11 10" fill="none" stroke="#333" strokeWidth=".9" className="ml-[4px]"><path d="M1 3.500h1.800L5.300 1v8L2.800 6.500H1zM7 3.500q1 1.500 0 3M8.500 2q2.200 3 0 6" /></svg>
    <div className="ml-[10px] mr-[12px] w-[44px] whitespace-nowrap text-right leading-[10.500px]">10:26 p. m.<br />07/11/2025</div>
  </div>
);

export default function App() {
  return (
    <div className="flex h-[720px] w-[1280px] flex-col overflow-hidden font-['Open_Sans','Noto_Sans',sans-serif] leading-normal">
      <Titlebar />
      <Tabs />
      <Ribbon />
      <FormulaBar />
      <Sheet />
      <SheetBar />
      <Status />
      <Taskbar />
    </div>
  );
}
